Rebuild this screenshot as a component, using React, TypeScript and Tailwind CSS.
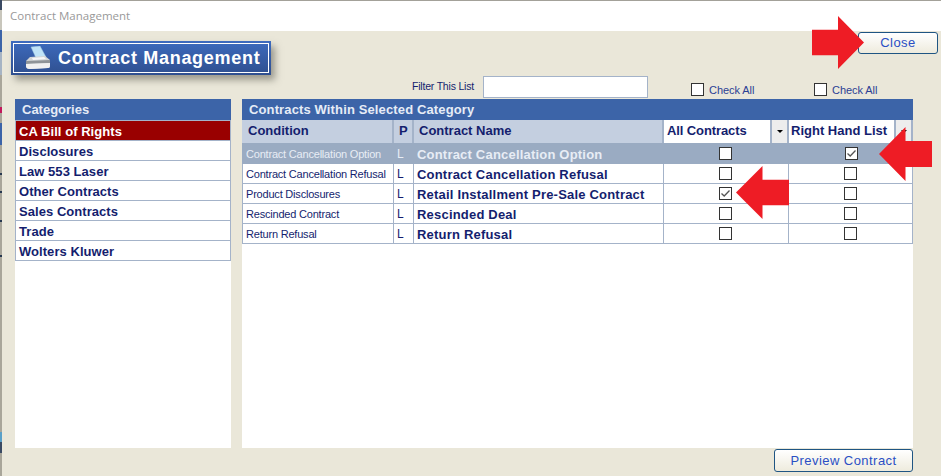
import React from 'react';

const categories = ['CA Bill of Rights', 'Disclosures', 'Law 553 Laser', 'Other Contracts', 'Sales Contracts', 'Trade', 'Wolters Kluwer'];

const contracts = [
  { condition: 'Contract Cancellation Option', name: 'Contract Cancellation Option', all: false, right: true, selected: true },
  { condition: 'Contract Cancellation Refusal', name: 'Contract Cancellation Refusal', all: false, right: false, selected: false },
  { condition: 'Product Disclosures', name: 'Retail Installment Pre-Sale Contract', all: true, right: false, selected: false },
  { condition: 'Rescinded Contract', name: 'Rescinded Deal', all: false, right: false, selected: false },
  { condition: 'Return Refusal', name: 'Return Refusal', all: false, right: false, selected: false },
];

const sans = 'font-["Liberation_Sans",Arial,sans-serif]';

function CheckBox({ checked }: { checked: boolean }) {
  return (
    <div className="w-[13px] h-[13px] border border-[#333333] bg-white flex items-center justify-center">
      {checked && (
        <svg width="11" height="11" viewBox="0 0 11 11" fill="none">
          <path d="M1.5 5.5 L4.2 8 L9.5 2.5" stroke="#555555" strokeWidth="1.3" />
        </svg>
      )}
    </div>
  );
}

function RedArrow({ className, left }: { className: string; left?: boolean }) {
  return (
    <svg className={className} viewBox="0 0 52 54" preserveAspectRatio="none">
      <polygon fill="#EE1C25" points={left ? '0,27 26,0 26,14 52,14 52,40 26,40 26,54' : '52,27 26,0 26,14 0,14 0,40 26,40 26,54'} />
    </svg>
  );
}

function PrinterIcon() {
  return (
    <svg width="26" height="24" viewBox="0 0 26 24">
      <polygon points="6,1 15,0 21,11 11,12" fill="#BFE3F7" stroke="#9CC4DE" strokeWidth="0.5" />
      <path d="M5 11 L20 10 L25 14 L25 20 Q25 22 23 22 L5 23 Q1 23 1 20 L1 15 Z" fill="#D4D7D8" />
      <path d="M1 15 L25 14 L25 17 L1 18 Z" fill="#8F9498" />
      <path d="M1 18 L25 17 L25 20 Q25 22 23 22 L5 23 Q1 23 1 20 Z" fill="#F1F1F1" />
      <path d="M7 12 L19 11 L21 13 L8 14 Z" fill="#F7F7F7" />
    </svg>
  );
}

function GlossButton({ label, className }: { label: string; className: string }) {
  return (
    <button className={`${className} rounded-[3px] border border-[#1F5583] bg-gradient-to-b from-[#FFFFFF] to-[#EEEBDD] text-[13px] tracking-[0.45px] text-[#2A4FC4] flex items-center justify-center`}>
      {label}
    </button>
  );
}

function HeaderCell({ label, className }: { label: string; className: string }) {
  return (
    <div className={`${className} h-[23px] pb-[2px] flex items-center text-[13px] font-bold text-[#141E6E] border-r-2 border-[#A4B3C9]`}>
      {label}
    </div>
  );
}

function DropArrow() {
  return (
    <div className="w-[17px] h-[23px] bg-[#EDEDED] border-r-2 border-[#A4B3C9] flex items-center justify-center">
      <div className="border-x-[3px] border-t-[3px] border-x-transparent border-t-black" />
    </div>
  );
}

// sliver of the desktop behind the window
function DesktopEdge() {
  return (
    <div className="absolute left-0 top-0 w-[2px] h-full bg-[#A9A69A] flex flex-col">
      <div className="h-[10px] bg-[#3A4A63]" />
      <div className="h-[20px] bg-[#C8C6BC]" />
      <div className="h-[22px] bg-[#3C64A8]" />
      <div className="h-[23px] bg-[#A6B4C4]" />
      <div className="h-[32px]" />
      <div className="h-[6px] bg-[#C2185B]" />
      <div className="h-[10px]" />
      <div className="h-[22px] bg-[#3C64A8]" />
      <div className="h-[28px]" />
      <div className="h-[2px] bg-[#26384F]" />
      <div className="h-[16px]" />
      <div className="h-[2px] bg-[#26384F]" />
      <div className="h-[27px]" />
      <div className="h-[2px] bg-[#26384F]" />
      <div className="h-[33px]" />
      <div className="h-[2px] bg-[#26384F]" />
      <div className="h-[175px]" />
      <div className="h-[10px] bg-[#5AA0C8]" />
      <div className="h-[11px] bg-[#3A4A63]" />
    </div>
  );
}

export default function App() {
  return (
    <div className={`${sans} relative w-[941px] h-[476px] overflow-hidden bg-[#EAE7D9] flex flex-col`}>
      {/* Window title */}
      <div className="h-px bg-[#A3A199]" />
      <div className="h-[30px] bg-white pl-[10px] flex items-center text-[11.5px] text-[#999999] font-['Open_Sans',sans-serif]">
        Contract Management
      </div>

      {/* Top band */}
      <div className="h-[68px] flex items-start">
        <div className="ml-[11px] mt-[10px] w-[260px] h-[34px] bg-gradient-to-b from-[#3D6BBE] to-[#2F4F8F] p-[2px] shadow-[4px_5px_7px_rgba(90,90,80,0.55)]">
          <div className="h-full border border-white flex items-center pl-[11px] gap-[7px]">
            <PrinterIcon />
            <span className="text-[18px] font-bold tracking-[0.7px] text-white">Contract Management</span>
          </div>
        </div>
        <div className="ml-[141px] mt-[45px] flex items-center">
          <span className="w-[71px] whitespace-nowrap text-[10.5px] tracking-[-0.2px] text-[#141E6E]">Filter This List</span>
          <div className="w-[165px] h-[22px] bg-white border border-[#A4B3C9]" />
        </div>
        <div className="ml-[43px] mt-[52px] w-[123px] flex items-center gap-[5px] leading-none">
          <CheckBox checked={false} />
          <span className="pt-[1px] text-[11px] tracking-[-0.05px] text-[#2A3F94]">Check All</span>
        </div>
        <div className="mt-[52px] flex items-center gap-[5px] leading-none">
          <CheckBox checked={false} />
          <span className="pt-[1px] text-[11px] tracking-[-0.05px] text-[#2A3F94]">Check All</span>
        </div>
      </div>

      {/* Panels */}
      <div className="h-[349px] pl-[15px] flex gap-[11px]">
        <div className="w-[216px] bg-white">
          <div className="h-[21px] bg-[#3C64A8] pl-[7px] flex items-center text-[13px] font-bold text-[#E6ECF6]">Categories</div>
          <div className="border-t border-[#A4B3C9]">
            {categories.map((c, i) => (
              <div
                key={c}
                className={`h-[20px] pl-[3px] pt-[2px] flex items-center text-[13px] font-bold tracking-[0.05px] border-x border-b border-[#A4B3C9] ${i === 0 ? 'bg-[#990000] text-white' : 'text-[#141E6E]'}`}
              >
                {c}
              </div>
            ))}
          </div>
        </div>

        <div className="w-[671px] bg-white">
          <div className="h-[21px] bg-[#3C64A8] pl-[7px] flex items-center text-[13px] font-bold tracking-[0.13px] text-[#E6ECF6]">
            Contracts Within Selected Category
          </div>
          <div className="flex">
            <HeaderCell label="Condition" className="w-[152px] pl-[6px] bg-[#C4CFE0]" />
            <HeaderCell label="P" className="w-[20px] pl-[5px] bg-[#C4CFE0]" />
            <HeaderCell label="Contract Name" className="w-[250px] pl-[5px] bg-[#C4CFE0]" />
            <HeaderCell label="All Contracts" className="w-[108px] pl-[3px] tracking-[-0.1px] bg-white" />
            <DropArrow />
            <HeaderCell label="Right Hand List" className="w-[107px] pl-[2px] bg-white" />
            <DropArrow />
          </div>
          {contracts.map((row) => (
            <div
              key={row.name}
              className={`flex ${row.selected ? 'h-[21px] bg-[#9AABC2] text-[#E8EDF5]' : 'h-[20px] border-b border-[#A4B3C9] text-[#141E6E]'}`}
            >
              <div className={`w-[152px] pt-[1px] flex items-center text-[11px] tracking-[-0.2px] ${row.selected ? 'pl-[4px]' : 'pl-[3px] border-x border-[#A4B3C9]'}`}>
                {row.condition}
              </div>
              <div className={`w-[20px] pl-[3px] pt-[1px] flex items-center text-[12px] ${row.selected ? '' : 'border-r border-[#A4B3C9]'}`}>L</div>
              <div className={`w-[250px] pl-[3px] pt-[2px] flex items-center text-[13px] font-bold tracking-[0.2px] ${row.selected ? '' : 'border-r border-[#A4B3C9]'}`}>
                {row.name}
              </div>
              <div className={`w-[125px] pr-[2px] flex items-center justify-center ${row.selected ? '' : 'border-r border-[#A4B3C9]'}`}>
                <CheckBox checked={row.all} />
              </div>
              <div className={`w-[124px] flex items-center justify-center ${row.selected ? '' : 'border-r border-[#A4B3C9]'}`}>
                <CheckBox checked={row.right} />
              </div>
            </div>
          ))}
        </div>
      </div>

      {/* Footer */}
      <div className="flex justify-end pr-[28px] pt-[1px]">
        <GlossButton label="Preview Contract" className="w-[139px] h-[23px]" />
      </div>

      <GlossButton label="Close" className="absolute left-[858px] top-[32px] w-[80px] h-[22px]" />

      <DesktopEdge />

      {/* Callout arrows */}
      <RedArrow className="absolute left-[812px] top-[16px] w-[52px] h-[53px]" />
      <RedArrow left className="absolute left-[879px] top-[127px] w-[53px] h-[54px]" />
      <RedArrow left className="absolute left-[736px] top-[166px] w-[53px] h-[53px]" />
    </div>
  );
}
